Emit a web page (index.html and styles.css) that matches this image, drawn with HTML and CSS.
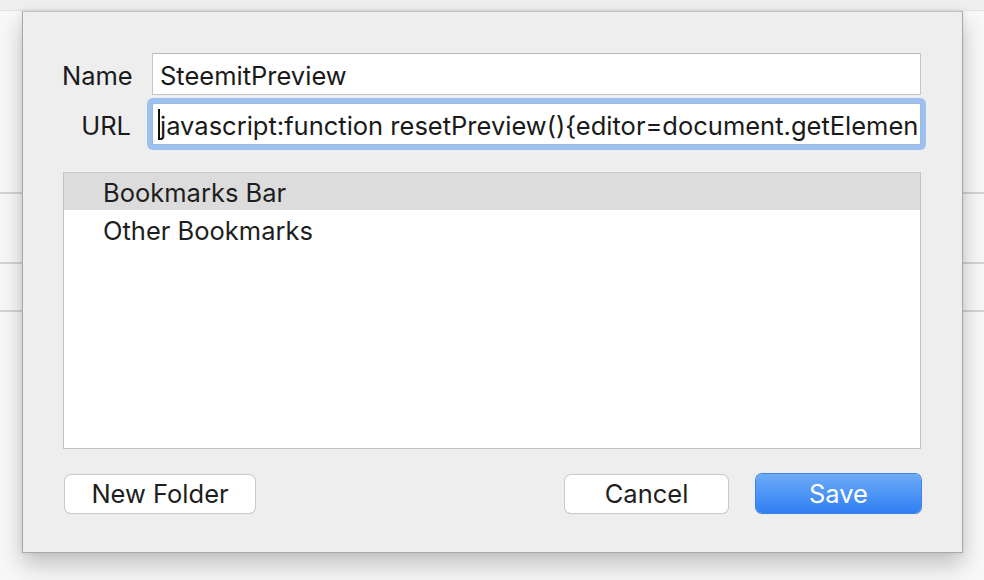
FILE: index.html
```html
<!DOCTYPE html>
<html>
<head>
<meta charset="utf-8">
<link rel="stylesheet" href="styles.css">
</head>
<body>
<div class="page">
  <div class="topbar"></div>
  <div class="rule r1"></div>
  <div class="rule r2"></div>
  <div class="rule r3"></div>
</div>
<div class="dialog">
  <div class="form">
    <label class="label">Name</label>
    <div class="field"><span class="value">SteemitPreview</span></div>
    <label class="label">URL</label>
    <div class="field focused"><span class="caret"></span><span class="value">javascript:function resetPreview(){editor=document.getElemen</span></div>
  </div>
  <div class="list">
    <div class="row selected">Bookmarks Bar</div>
    <div class="row">Other Bookmarks</div>
  </div>
  <div class="buttons">
    <button class="btn">New Folder</button>
    <div class="spacer"></div>
    <button class="btn cancel">Cancel</button>
    <button class="btn primary">Save</button>
  </div>
</div>
</body>
</html>
```
FILE: styles.css
```css
* { box-sizing: border-box; }
html, body { margin: 0; padding: 0; }
body {
  width: 984px;
  height: 580px;
  overflow: hidden;
  background: #f8f8f8;
  font-family: "Inter", "Liberation Sans", sans-serif;
  color: #1e1e1e;
  position: relative;
}
.page { position: absolute; inset: 0; }
.topbar { height: 11px; background: #efefef; border-bottom: 1px solid #e2e2e2; }
.rule { position: absolute; left: 0; right: 0; height: 2px; background: #d3d3d3; }
.r1 { top: 192px; }
.r2 { top: 262px; }
.r3 { top: 310px; }

.dialog {
  position: absolute;
  left: 22px;
  top: 11px;
  width: 941px;
  height: 542px;
  background: #eeeeee;
  border: 1px solid #a9a9a9;
  border-top-color: #c4c4c4;
  box-shadow: 0 12px 22px rgba(0,0,0,0.22), 0 0 6px rgba(0,0,0,0.08);
  padding: 41px 41px 0 39px;
  display: flex;
  flex-direction: column;
}
.form {
  display: grid;
  grid-template-columns: 69px 1fr;
  grid-auto-rows: 42px;
  column-gap: 21px;
  row-gap: 8px;
  align-items: center;
}
.label {
  font-size: 25.5px;
  text-align: right;
  color: #1a1a1a;
  height: 42px;
  line-height: 38px;
  padding-top: 4px;
}
.field {
  height: 42px;
  background: #fff;
  border: 1px solid #c6c6c6;
  border-top-color: #b9b9b9;
  padding: 3px 4px 0 7px;
  display: flex;
  align-items: center;
  overflow: hidden;
  white-space: nowrap;
  font-size: 25.5px;
  color: #1a1a1a;
}
.field.focused {
  border-color: #9cb8de;
  box-shadow: 0 0 0 5px #9dc1ef;
  border-radius: 2px;
}
.caret {
  display: inline-block;
  width: 2px;
  height: 31px;
  background: #111;
  flex: none;
  margin-left: -2px;
  margin-top: -2px;
}
.value { flex: none; }

.list {
  margin-top: 27px;
  margin-left: 1px;
  height: 277px;
  background: #fff;
  border: 1px solid #c3c3c3;
  border-top-color: #c8c8c8;
}
.row {
  height: 39px;
  line-height: 36px;
  padding-top: 3px;
  padding-left: 39px;
  font-size: 25.5px;
  color: #1e1e1e;
}
.row.selected { background: #dcdcdc; height: 37px; line-height: 34px; }

.buttons {
  margin-top: 25px;
  display: flex;
  align-items: center;
}
.spacer { flex: 1; }
.btn {
  font-family: "Inter", "Liberation Sans", sans-serif;
  font-size: 25.5px;
  height: 38px;
  background: #fff;
  color: #1e1e1e;
  border: none;
  border-radius: 6px;
  box-shadow: 0 0 0 1px #c9c9c9, 0 1px 1px rgba(0,0,0,0.18);
  padding: 0;
  margin: 0;
}
.buttons .btn:first-child { width: 190px; margin-left: 3px; }
.btn.cancel { width: 163px; margin-right: 28px; }
.btn.primary {
  width: 165px;
  height: 39px;
  color: #fff;
  background: linear-gradient(#6dabf7, #2f7ff3);
  box-shadow: 0 0 0 1px #3a82e6, 0 1px 1px rgba(0,0,0,0.12);
}
```
